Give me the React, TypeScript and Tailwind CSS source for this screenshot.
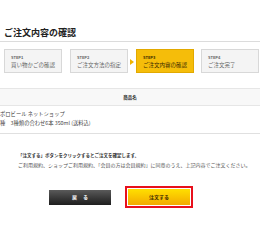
const steps = [
  {no: "STEP1", label: "買い物かごの確認", active: false},
  {no: "STEP2", label: "ご注文方法の指定", active: false},
  {no: "STEP3", label: "ご注文内容の確認", active: true},
  {no: "STEP4", label: "ご注文完了", active: false},
];

function StepBox({no, label, active}: {no: string; label: string; active: boolean}) {
  return (
    <div
      className={
        active
          ? "flex h-[24px] w-[58px] flex-col justify-center border border-[#e2a900] bg-[#f5bd0a] pl-[6px] text-[#3a2a00]"
          : "flex h-[24px] w-[58px] flex-col justify-center border border-[#d8d8d8] bg-[#f4f4f4] pl-[6px] text-[#666]"
      }
    >
      <span className="text-[4px] leading-[6px] font-bold">{no}</span>
      <span className="mt-[2px] text-[5.5px] leading-[6px] whitespace-nowrap">{label}</span>
    </div>
  );
}

export default function App() {
  return (
    <div className="h-[241px] w-[260px] overflow-hidden bg-white font-['Noto_Sans_CJK_JP',sans-serif] text-[#333]">
      <h1 className="px-[4px] pt-[27px] pb-[3px] text-[9px] leading-[11px] font-bold text-[#222]">ご注文内容の確認</h1>
      <div className="border-b border-[#dcdcdc]" />

      <div className="mt-[7px] flex items-center pl-[4px]">
        <StepBox {...steps[0]} />
        <div className="w-[8px]" />
        <StepBox {...steps[1]} />
        <div className="flex w-[8px] items-center justify-center pt-[2px]">
          <span className="h-0 w-0 border-y-[3px] border-l-[4px] border-y-transparent border-l-[#f0b400]" />
        </div>
        <StepBox {...steps[2]} />
        <div className="w-[7px]" />
        <StepBox {...steps[3]} />
      </div>

      <div className="mt-[15px] flex h-[18px] items-center justify-center border-y border-[#e6e6e6] bg-[#f8f8f8] text-[4.5px] font-bold text-[#333]">
        商品名
      </div>
      <div className="border-b border-[#e0e0e0] pt-[4px] pb-[5px] text-[5.3px] leading-[9px] text-[#444]">
        <p>ポロビール ネットショップ</p>
        <p>種　3種類の合わせ6本 350ml (送料込)</p>
      </div>

      <div className="mt-[17px] pl-[18px] text-[4.5px] leading-[9px] text-[#333]">
        <p className="font-bold">「注文する」ボタンをクリックするとご注文を確定します。</p>
        <p className="text-[5px] whitespace-nowrap text-[#555]">
          ご利用規約、ショップご利用規約、「会員の方は会員規約」に同意のうえ、上記内容でご注文ください。
        </p>
      </div>

      <div className="mt-[17px] flex items-center pl-[49px]">
        <button className="flex h-[15px] w-[62px] items-center justify-center gap-[6px] bg-gradient-to-b from-[#5a5a5a] to-[#1e1e1e] text-[5px] font-bold text-white">
          <span>戻</span>
          <span>る</span>
        </button>
        <div className="ml-[14px] border-[2px] border-[#e8101c] p-[1px]">
          <button className="flex h-[16px] w-[62px] items-center justify-center bg-gradient-to-b from-[#ffe000] to-[#f2a900] text-[5px] font-bold text-[#3a2a00]">
            注文する
          </button>
        </div>
      </div>
    </div>
  );
}
